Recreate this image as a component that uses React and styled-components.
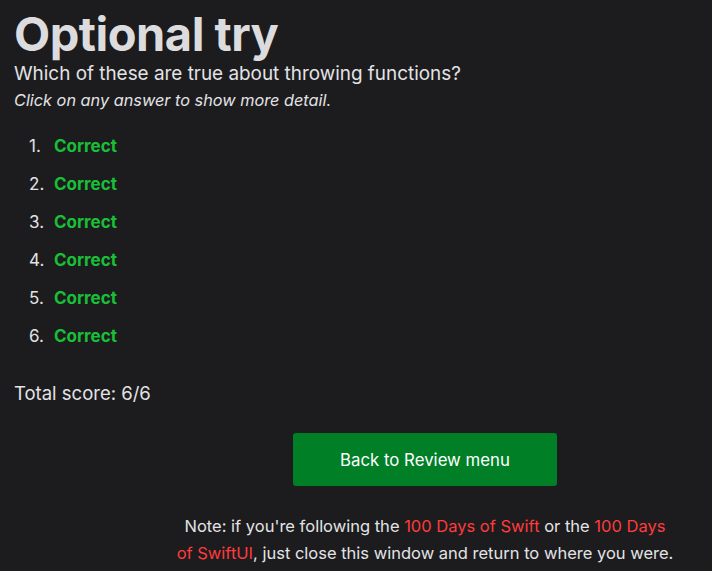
import styled, { createGlobalStyle } from 'styled-components'

const GlobalStyle = createGlobalStyle`
  html, body {
    margin: 0;
    padding: 0;
    background: #1c1c1e;
    color: #e3e3e5;
    font-family: Inter, "Noto Sans", sans-serif;
  }
`

const Page = styled.main`
  padding: 0 14px;
  box-sizing: border-box;
`

const Title = styled.h1`
  margin: 8px 0 0;
  font-size: 47px;
  font-weight: 700;
  line-height: 52px;
  letter-spacing: -0.5px;
  color: #dcdcde;
`

const Question = styled.p`
  margin: 1px 0 0;
  font-size: 18.9px;
  line-height: 26px;
`

const Hint = styled.p`
  margin: 1px 0 0;
  font-size: 16.3px;
  font-style: italic;
  line-height: 24px;
`

const Answers = styled.ol`
  margin: 22px 0 0;
  padding-left: 15px;
  list-style: none;
  counter-reset: answer;
  font-size: 17px;
`

const Answer = styled.li`
  display: flex;
  height: 38px;
  line-height: 24px;
  counter-increment: answer;

  &::before {
    content: counter(answer) ".";
    width: 25px;
    font-weight: 400;
  }
`

const Result = styled.span`
  color: ${p => (p.$ok ? '#19c037' : '#ff3b30')};
  font-weight: 700;
`

const Score = styled.p`
  margin: 18px 0 0;
  font-size: 18.5px;
  line-height: 26px;
`

const Footer = styled.div`
  display: flex;
  flex-direction: column;
  align-items: center;
  margin-left: 156px;
  width: 510px;
`

const BackButton = styled.button`
  margin-top: 27px;
  width: 264px;
  height: 53px;
  border: none;
  border-radius: 3px;
  background: #007f27;
  color: #fff;
  font-family: inherit;
  font-size: 16.8px;
`

const Note = styled.p`
  margin: 27px 0 0;
  text-align: center;
  font-size: 16.5px;
  line-height: 27px;
`

const Link = styled.a`
  color: #ff3b3b;
  text-decoration: none;
`

const answers = [true, true, true, true, true, true]

export default function App() {
  return (
    <>
      <GlobalStyle />
      <Page>
        <Title>Optional try</Title>
        <Question>Which of these are true about throwing functions?</Question>
        <Hint>Click on any answer to show more detail.</Hint>
        <Answers>
          {answers.map((ok, i) => (
            <Answer key={i}>
              <Result $ok={ok}>{ok ? 'Correct' : 'Wrong'}</Result>
            </Answer>
          ))}
        </Answers>
        <Score>Total score: 6/6</Score>
        <Footer>
          <BackButton>Back to Review menu</BackButton>
          <Note>
            Note: if you're following the <Link href="#">100 Days of Swift</Link> or the{' '}
            <Link href="#">100 Days of{'\u00a0'}SwiftUI</Link>, just close this window and return to where you were.
          </Note>
        </Footer>
      </Page>
    </>
  )
}
